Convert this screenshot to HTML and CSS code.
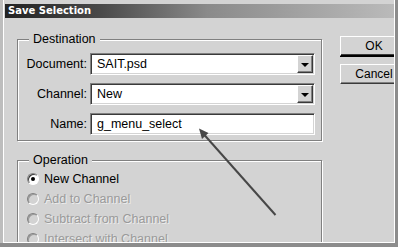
FILE: index.html
```html
<!DOCTYPE html>
<html>
<head>
<meta charset="utf-8">
<link rel="stylesheet" href="styles.css">
</head>
<body>
<div class="window">
  <div class="titlebar">Save Selection</div>
  <div class="content">
    <div class="main">
      <fieldset class="group dest">
        <legend>Destination</legend>
        <div class="form">
          <label class="lbl">Document:</label>
          <div class="field select"><span class="val">SAIT.psd</span><span class="drop"><i class="tri"></i></span></div>
          <label class="lbl">Channel:</label>
          <div class="field select"><span class="val">New</span><span class="drop"><i class="tri"></i></span></div>
          <label class="lbl">Name:</label>
          <div class="field"><span class="val">g_menu_select</span></div>
        </div>
      </fieldset>
      <fieldset class="group op">
        <legend>Operation</legend>
        <div class="radios">
          <div class="radio checked"><span class="dot"></span>New Channel</div>
          <div class="radio disabled"><span class="dot"></span>Add to Channel</div>
          <div class="radio disabled"><span class="dot"></span>Subtract from Channel</div>
          <div class="radio disabled"><span class="dot"></span>Intersect with Channel</div>
        </div>
      </fieldset>
    </div>
    <div class="buttons">
      <button class="btn default">OK</button>
      <button class="btn">Cancel</button>
    </div>
  </div>
</div>
<svg class="arrow" width="398" height="247" viewBox="0 0 398 247">
  <line x1="275.5" y1="215" x2="204" y2="134.5" stroke="#474747" stroke-width="2"/>
  <polygon points="199,128.5 208.5,133 202,139" fill="#474747"/>
</svg>
</body>
</html>
```
FILE: styles.css
```css
html, body {
  margin: 0;
  padding: 0;
}
body {
  position: relative;
  width: 398px;
  height: 247px;
  overflow: hidden;
  background: #8c8c8c;
  font-family: "Liberation Sans", Arial, sans-serif;
  font-size: 12.5px;
  color: #000;
}
.window {
  box-sizing: border-box;
  margin-left: 3px;
  width: 392px;
  height: 243px;
  border: 1px solid #fff;
  border-top: 0;
  background: #d3d3d3;
  box-shadow: -3px 0 0 #bdbdbd;
  overflow: hidden;
}
.titlebar {
  margin: 4px 0 0 1px;
  height: 14px;
  line-height: 14px;
  padding-left: 3px;
  background: linear-gradient(to right, #222 0%, #4a4a4a 25%, #8a8a8a 52%, #bababa 100%);
  color: #fff;
  font-family: "DejaVu Sans", Verdana, sans-serif;
  font-weight: bold;
  font-size: 10px;
}
.content {
  display: flex;
  align-items: flex-start;
}
.main {
  margin-left: 13px;
  display: flex;
  flex-direction: column;
}
.group {
  box-sizing: border-box;
  width: 305px;
  margin: 0;
  padding: 0;
  min-inline-size: 0;
  border: 1px solid #808080;
  box-shadow: inset 1px 1px 0 #fff, 1px 1px 0 #fff;
}
.group legend {
  margin-left: 11px;
  padding: 0 4px;
  line-height: 15px;
  background: #d3d3d3;
}
.dest {
  margin-top: 14px;
  height: 109px;
}
.op {
  margin-top: 12px;
  height: 110px;
}
.form {
  display: grid;
  grid-template-columns: 72px 225px;
  grid-auto-rows: 22px;
  row-gap: 8px;
  align-items: center;
  padding-top: 6px;
}
.lbl {
  text-align: right;
  padding-right: 3px;
}
.field {
  box-sizing: border-box;
  height: 22px;
  display: flex;
  align-items: center;
  background: #fff;
  border: 1px solid;
  border-color: #808080 #fff #fff #808080;
  box-shadow: inset 1px 1px 0 #3a3a3a, inset -1px -1px 0 #d4d4d4;
  padding: 1px;
}
.val {
  flex: 1;
  padding-left: 5px;
  line-height: 18px;
}
.drop {
  box-sizing: border-box;
  width: 16px;
  height: 18px;
  background: #d3d3d3;
  border: 1px solid;
  border-color: #fff #3a3a3a #3a3a3a #fff;
  box-shadow: inset -1px -1px 0 #808080;
  display: flex;
  align-items: center;
  justify-content: center;
}
.tri {
  width: 0;
  height: 0;
  border-left: 4px solid transparent;
  border-right: 4px solid transparent;
  border-top: 4px solid #000;
  margin-top: 1px;
}
.radios {
  display: flex;
  flex-direction: column;
  padding: 1px 0 0 9px;
}
.radio {
  display: flex;
  align-items: center;
  height: 20px;
  gap: 5px;
}
.dot {
  box-sizing: border-box;
  width: 12px;
  height: 12px;
  border-radius: 50%;
  border: 1px solid;
  border-color: #808080 #fff #fff #808080;
  box-shadow: inset 1px 1px 0 #3a3a3a;
  background: #fff;
  display: flex;
  align-items: center;
  justify-content: center;
}
.checked .dot::after {
  content: "";
  width: 4px;
  height: 4px;
  border-radius: 50%;
  background: #000;
}
.disabled {
  color: #9a9a9a;
  text-shadow: 1px 1px 0 #ececec;
}
.disabled .dot {
  background: #d3d3d3;
  box-shadow: inset 1px 1px 0 #9a9a9a;
}
.buttons {
  margin-left: 18px;
  margin-top: 18px;
  display: flex;
  flex-direction: column;
  gap: 8px;
  flex-shrink: 0;
}
.btn {
  box-sizing: border-box;
  width: 68px;
  height: 20px;
  padding: 0;
  margin: 0;
  font: inherit;
  font-size: 12px;
  color: #000;
  background: #d3d3d3;
  border: 1px solid;
  border-color: #fff #3a3a3a #3a3a3a #fff;
  box-shadow: inset -1px -1px 0 #808080;
  text-align: center;
}
.btn.default {
  border-color: #fff #000 #000 #fff;
  box-shadow: inset -1px -1px 0 #3a3a3a, 0 1px 0 #000;
}
.arrow {
  position: absolute;
  left: 0;
  top: 0;
}
```
